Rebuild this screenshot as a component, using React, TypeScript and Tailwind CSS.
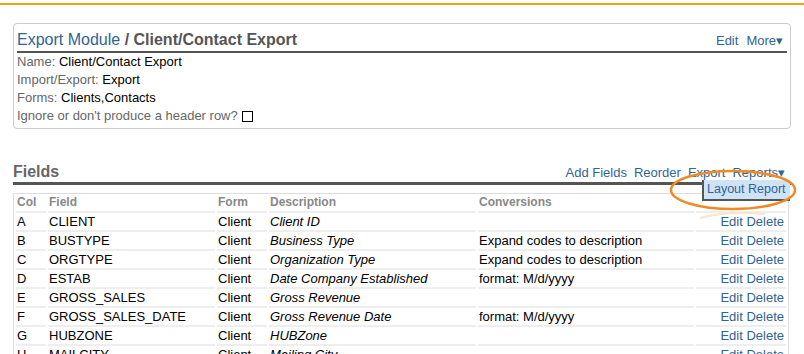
import React from "react";

const rows = [
  ["A", "CLIENT", "Client", "Client ID", ""],
  ["B", "BUSTYPE", "Client", "Business Type", "Expand codes to description"],
  ["C", "ORGTYPE", "Client", "Organization Type", "Expand codes to description"],
  ["D", "ESTAB", "Client", "Date Company Established", "format: M/d/yyyy"],
  ["E", "GROSS_SALES", "Client", "Gross Revenue", ""],
  ["F", "GROSS_SALES_DATE", "Client", "Gross Revenue Date", "format: M/d/yyyy"],
  ["G", "HUBZONE", "Client", "HUBZone", ""],
  ["H", "MAILCITY", "Client", "Mailing City", ""],
];

function Info({ label, value }: { label: string; value: React.ReactNode }) {
  return (
    <div className="h-[18px] leading-[18px]">
      <span className="text-[#666]">{label}</span> <span className="text-black">{value}</span>
    </div>
  );
}

export default function App() {
  return (
    <div className="relative h-[354px] w-[804px] overflow-hidden bg-white text-[13px] font-['Liberation_Sans',Arial,sans-serif]">
      <div className="h-[5px] border-b-[2px] border-[#f5a00f]" />

      <div className="ml-[13px] mr-[13px] mt-[18px] rounded-[4px] border border-[#ccc] px-[3px] pb-[3px]">
        <div className="flex items-end justify-between border-b-[2px] border-[#555] pb-[1px] pt-[6px]">
          <div className="text-[16px] leading-[20px] text-[#555]">
            <span className="text-[#2f6496]">Export Module</span> <span className="font-bold">/ Client/Contact Export</span>
          </div>
          <div className="flex gap-[8px] pr-[4px] text-[#2f6496]">
            <span>Edit</span>
            <span>More▾</span>
          </div>
        </div>
        <div>
          <Info label="Name:" value="Client/Contact Export" />
          <Info label="Import/Export:" value="Export" />
          <Info label="Forms:" value="Clients,Contacts" />
          <div className="flex h-[18px] items-center leading-[18px] text-[#666]">
            Ignore or don't produce a header row?
            <span className="ml-[4px] inline-block h-[11px] w-[11px] border-[1.5px] border-black" />
          </div>
        </div>
      </div>

      <div className="mx-[13px] mt-[33px]">
        <div className="flex items-end justify-between border-b-[3px] border-[#555] pb-[0px]">
          <div className="text-[16px] font-bold leading-[20px] text-[#666]">Fields</div>
          <div className="flex gap-[7px] pr-[6px] text-[#2f6496]">
            <span>Add Fields</span>
            <span>Reorder</span>
            <span>Export</span>
            <span>Reports▾</span>
          </div>
        </div>

        <div className="relative mt-[8px] mr-[2px] border border-b-0 border-[#ddd]">
          <table className="w-full border-separate border-spacing-x-[2px] border-spacing-y-0 leading-[17px]">
            <thead>
              <tr className="text-left text-[12px] font-bold text-[#888]">
                <th className="h-[19px] w-[30px] border-b-2 border-[#eee] px-[1px] font-bold">Col</th>
                <th className="w-[167px] border-b-2 border-[#eee] px-[1px] font-bold">Field</th>
                <th className="w-[50px] border-b-2 border-[#eee] px-[1px] font-bold">Form</th>
                <th className="w-[207px] border-b-2 border-[#eee] px-[1px] font-bold">Description</th>
                <th className="border-b-2 border-[#eee] px-[1px] font-bold">Conversions</th>
                <th className="w-[90px] border-b-2 border-[#eee]" />
              </tr>
            </thead>
            <tbody>
              {rows.map((r) => (
                <tr key={r[0]} className="text-black">
                  <td className="h-[19px] border-b-2 border-[#eee] px-[1px]">{r[0]}</td>
                  <td className="border-b-2 border-[#eee] px-[1px]">{r[1]}</td>
                  <td className="border-b-2 border-[#eee] px-[1px]">{r[2]}</td>
                  <td className="border-b-2 border-[#eee] px-[1px] italic">{r[3]}</td>
                  <td className="border-b-2 border-[#eee] px-[1px]">{r[4]}</td>
                  <td className="whitespace-nowrap border-b-2 border-[#eee] px-[2px] text-right text-[#2f6496]">Edit Delete</td>
                </tr>
              ))}
            </tbody>
          </table>
        </div>
      </div>

      <div className="absolute left-[702px] top-[180px] h-[21px] w-[88px] whitespace-nowrap border-b-[2px] border-l-[2px] border-[#555] bg-[#cfe3f7] pl-[3px] text-[12.5px] leading-[19px] text-[#2f6496]">
        Layout Report
      </div>

      <svg className="absolute left-0 top-0" width="804" height="354">
        <ellipse cx="733" cy="190" rx="62" ry="19" fill="none" stroke="#f08a24" strokeWidth="2.5" />
        <path d="M700 218 Q730 210 765 214" fill="none" stroke="#fbe3cc" strokeWidth="2" />
      </svg>
    </div>
  );
}
